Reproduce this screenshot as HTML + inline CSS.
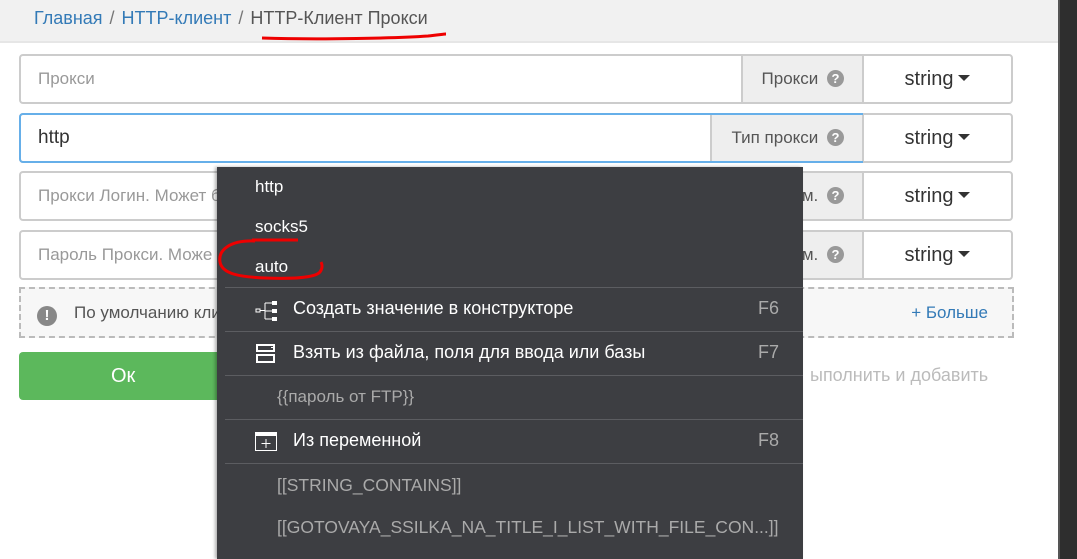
<!DOCTYPE html>
<html><head><meta charset="utf-8"><style>
*{box-sizing:border-box;margin:0;padding:0}
html,body{width:1077px;height:559px;overflow:hidden}
body{background:#fff;font-family:"Liberation Sans",sans-serif;position:relative}
.bc{position:absolute;left:0;top:0;width:1058px;height:43px;background:#f1f1f1;border-bottom:2px solid #e6e6e6;font-size:18px;line-height:36px;padding-left:34px;color:#555}
.bc a{color:#337ab7}
.bc .s{color:#777;margin:0 7px}
.side{position:absolute;left:1058px;top:0;width:19px;height:559px;background:#2e2e2e;border-left:2px solid #555}
.row{position:absolute;left:19px;width:994px;height:50px;border:2px solid #ccc;border-radius:4px;font-size:17px;color:#999}
.row .in{position:absolute;left:0;top:0;bottom:0;padding-left:17px;line-height:46px}
.row .ad{position:absolute;top:0;bottom:0;right:147px;background:#eee;border-left:2px solid #ccc;border-right:2px solid #ccc;color:#555;text-align:right;padding-right:18px;line-height:46px;font-size:17px}
.q{display:inline-block;width:17px;height:17px;border-radius:50%;background:#999;color:#fff;font-size:13px;font-weight:bold;line-height:17px;text-align:center;vertical-align:1px;margin-left:4px}
.row .st{position:absolute;right:0;top:0;bottom:0;width:147px;text-align:center;line-height:46px;color:#333;font-size:20px}
.car{display:inline-block;border-left:6px solid transparent;border-right:6px solid transparent;border-top:6px solid #333;vertical-align:4px;margin-left:5px}
.dash{position:absolute;left:19px;top:287px;width:995px;height:51px;border:2px dashed #bbb;background:#f7f7f7;font-size:17px;color:#555;line-height:47px}
.ok{position:absolute;left:19px;top:352px;width:240px;height:48px;background:#5cb85c;border-radius:4px;color:#fff;font-size:20px;line-height:48px;padding-left:92px}
.menu{position:absolute;left:217px;top:167px;width:586px;height:392px;background:#3d3e42;box-shadow:-2px 0 3px rgba(0,0,0,.3);color:#fff;font-size:17px}
.mi{position:absolute;left:0;width:540px}
.b{font-size:18px}
.sep{position:absolute;left:8px;width:578px;height:1px;background:#5c5d61}
.fk{position:absolute;right:24px;color:#aaa;font-size:18px}
.g{color:#aaa}
</style></head><body>
<div class="bc"><a>Главная</a><span class="s">/</span><a>HTTP-клиент</a><span class="s">/</span><span style="color:#555">HTTP-Клиент Прокси</span></div>
<div class="side"></div>
<svg style="position:absolute;left:0;top:0" width="1077" height="559"><path d="M262 38 C320 40 400 38 428 36 C438 35 444 34 446 34" stroke="#e00" stroke-width="3" fill="none"/></svg>

<div class="row" style="top:54px"><div class="in">Прокси</div><div class="ad" style="width:123px">Прокси <span class="q">?</span></div><div class="st">string<span class="car"></span></div></div>
<div class="row" style="top:113px"><div class="in" style="right:150px;border:2px solid #66afe9;margin:-2px;border-radius:4px 0 0 4px;color:#333;font-size:19px">http</div><div class="ad" style="width:154px">Тип прокси <span class="q">?</span></div><div class="st">string<span class="car"></span></div></div>
<div class="row" style="top:171px"><div class="in">Прокси Логин. Может б</div><div class="ad" style="width:123px">м. <span class="q">?</span></div><div class="st">string<span class="car"></span></div></div>
<div class="row" style="top:230px"><div class="in">Пароль Прокси. Може</div><div class="ad" style="width:123px">м. <span class="q">?</span></div><div class="st">string<span class="car"></span></div></div>
<div class="dash"><span class="q" style="width:20px;height:20px;line-height:20px;font-size:15px;margin-left:16px;margin-right:17px;vertical-align:-2px;background:#888">!</span>По умолчанию кли<span style="position:absolute;right:24px;color:#337ab7">+ Больше</span></div>
<div class="ok">Ок</div>
<div style="position:absolute;left:810px;top:365px;font-size:18px;color:#bbb">ыполнить и добавить</div>

<div class="menu">
<div class="mi" style="top:10px;left:38px">http</div>
<div class="mi" style="top:50px;left:38px">socks5</div>
<div class="mi" style="top:90px;left:38px">auto</div>
<div class="sep" style="top:120px"></div>
<div class="mi b" style="top:131px;left:76px">Создать значение в конструкторе</div><span class="fk" style="top:131px;position:absolute">F6</span>
<svg style="position:absolute;left:38px;top:134px" width="24" height="20"><rect x="1" y="8" width="4" height="3" fill="none" stroke="#fff"/><path d="M5 9.5H10M10 2V18M10 2H17M10 10H17M10 18H17" stroke="#fff" fill="none"/><rect x="17" y="0" width="5" height="4" fill="#fff"/><rect x="17" y="8" width="5" height="4" fill="#fff"/><rect x="17" y="16" width="5" height="4" fill="#fff"/></svg>
<div class="sep" style="top:164px"></div>
<div class="mi b" style="top:175px;left:76px">Взять из файла, поля для ввода или базы</div><span class="fk" style="top:175px;position:absolute">F7</span>
<svg style="position:absolute;left:39px;top:177px" width="20" height="20"><rect x="0" y="0" width="19" height="8" fill="#fff"/><rect x="0" y="10" width="19" height="9" fill="#fff"/><rect x="2" y="12" width="15" height="5" fill="#3d3e42"/><rect x="2" y="2" width="15" height="4" fill="#3d3e42"/><rect x="15" y="3" width="2" height="1" fill="#fff"/></svg>
<div class="sep" style="top:208px"></div>
<div class="mi g" style="top:220px;left:60px">{{пароль от FTP}}</div>
<div class="sep" style="top:252px"></div>
<div class="mi b" style="top:263px;left:76px">Из переменной</div><span class="fk" style="top:263px;position:absolute">F8</span>
<svg style="position:absolute;left:38px;top:265px" width="22" height="20"><rect x="0.5" y="0.5" width="21" height="18" fill="none" stroke="#fff"/><rect x="0" y="0" width="22" height="4" fill="#fff"/><path d="M11 7V16M6.5 11.5H15.5" stroke="#fff"/></svg>
<div class="sep" style="top:296px"></div>
<div class="mi g" style="top:308px;left:60px;font-size:17.5px">[[STRING_CONTAINS]]</div>
<div class="mi g" style="top:350px;left:60px;font-size:17.5px">[[GOTOVAYA_SSILKA_NA_TITLE_I_LIST_WITH_FILE_CON...]]</div>
</div>
<svg style="position:absolute;left:0;top:0" width="1077" height="559"><path d="M252 240 L298 240" stroke="#e00" stroke-width="3"/><path d="M255 241 C230 240 218 250 220 262 C222 274 240 277 265 278 C290 279 315 278 320 272 C323 268 322 264 321 262" stroke="#e00" stroke-width="3" fill="none"/></svg>
</body></html>
